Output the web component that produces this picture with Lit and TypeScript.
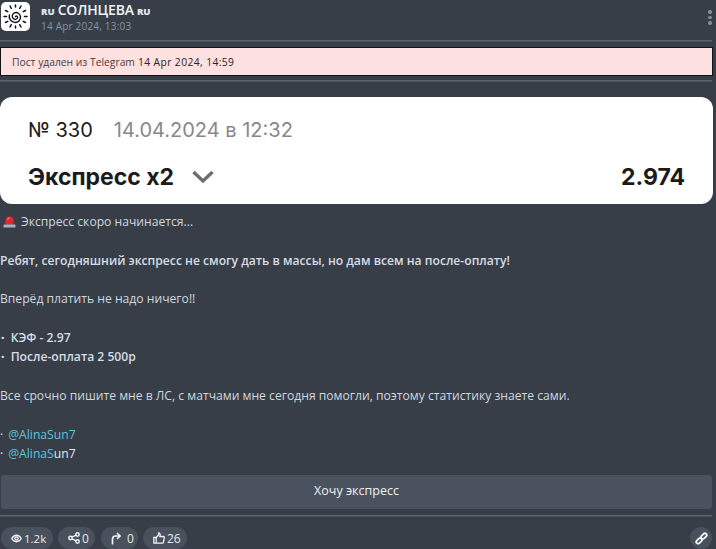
import { LitElement, html, css } from "lit";
import { customElement } from "lit/decorators.js";

@customElement("app-root")
export class AppRoot extends LitElement {
  static styles = css`
    :host { display: block; width: 716px; height: 549px; overflow: hidden; background: #373e48; color: #d5dae2; font-family: "Open Sans", "Noto Sans", sans-serif; font-size: 12px; }
    .wrap { width: 712px; display: flex; flex-direction: column; padding-top: 2px; }
    .head { display: flex; height: 30px; padding-left: 1px; position: relative; }
    .avatar { width: 29px; height: 29px; border-radius: 5px; background: #fff; display: flex; align-items: center; justify-content: center; flex: none; }
    .who { margin-left: 11px; display: flex; flex-direction: column; }
    .name { font-size: 14px; line-height: 16px; color: #f2f5f8; font-weight: 600; display: flex; align-items: baseline; gap: 3px; letter-spacing: -0.15px; }
    .flag { font-size: 9.5px; font-weight: 800; color: #e4e8ee; letter-spacing: 0; }
    .date { font-size: 10px; line-height: 14px; color: #8494a8; margin-top: -1px; letter-spacing: 0.2px; }
    .dots { position: absolute; left: 708px; top: 8px; display: flex; flex-direction: column; gap: 2px; }
    .dots i { width: 3.5px; height: 3.5px; border-radius: 50%; background: #7e8ea3; display: block; }
    .rule { height: 1px; background: #5a6470; border-bottom: 1px solid #49525d; margin-top: 8px; }
    .alert { margin-top: 5px; width: 713px; height: 29px; box-sizing: border-box; border: 1.5px solid #10141a; background: #fde0e0; color: #4a3a3c; font-size: 10.3px; display: flex; align-items: center; padding-left: 11px; }
    .alert b { font-weight: 500; color: #2f2023; margin-left: 3px; letter-spacing: 0.4px; }
    .rule2 { margin-top: 4px; }
    .card { margin-top: 15px; width: 713px; height: 107px; box-sizing: border-box; background: #fff; border-radius: 12px; padding: 21px 28px 0; font-family: "Inter", sans-serif; color: #1b1b1d; }
    .row1 { font-size: 20px; line-height: 24px; display: flex; gap: 21px; }
    .row1 span { color: #85888d; }
    .row2 { display: flex; align-items: center; margin-top: 21px; font-size: 23px; font-weight: 700; line-height: 28px; }
    .row2 svg { margin-left: 18px; }
    .row2 .odd { margin-left: auto; }
    .post { margin-top: 8px; line-height: 19.35px; font-size: 12.15px; color: #d0d6df; }
    .post p { margin: 0; white-space: nowrap; }
    .gap { height: 19.35px; }
    .strong { font-weight: 600; color: #d6dce4; }
    .semi { font-weight: 500; color: #e4e8ee; }
    .siren { display: inline-block; vertical-align: -2px; margin: 0 5px 0 3px; }
    .link { color: #5cc4de; margin-left: 5px; }
    .bullet { margin-right: 3px; margin-left: 1px; font-weight: 800; }
    .btn { margin-top: 12px; margin-left: 1px; width: 711px; height: 34px; background: #49525e; border-radius: 3px; display: flex; align-items: center; justify-content: center; color: #eef1f5; font-weight: 500; font-size: 12.5px; padding-bottom: 3px; box-sizing: border-box; }
    .rule3 { margin-top: 6px; }
    .foot { display: flex; margin-top: 10px; gap: 5px; padding-left: 1px; position: relative; }
    .pill { height: 22px; border-radius: 11px; background: #48515c; display: flex; align-items: center; gap: 2px; padding: 0 0 0 10px; color: #e6eaef; font-size: 12px; font-weight: 500; box-sizing: border-box; }
    .p1 { width: 52px; font-size: 11.5px; } .p2 { width: 37px; } .p3 { width: 37px; margin-left: 1px; gap: 3px; } .p4 { width: 44px; }
    .chain { position: absolute; left: 690px; top: 0; width: 22px; height: 22px; border-radius: 50%; background: #48515c; display: flex; align-items: center; justify-content: center; }
  `;

  render() {
    return html`
      <div class="wrap">
        <div class="head">
          <div class="avatar">
            <svg width="25" height="25" viewBox="0 0 25 25" fill="none" stroke="#111" stroke-linecap="round">
              <path stroke-width="1.4" d="M12.5 12.5c1-1 2.4 0 2 1.4-.5 1.7-3 2-4.3.7-1.7-1.7-1-4.8 1.2-5.700 2.800-1.100 5.800.8 6.100 3.800.3 3.400-2.500 6-5.800 5.700-3.800-.3-6.200-4-5.300-7.500"/>
              <path stroke-width="1.5" d="M12.5 1v2M18 2l-1.300 2.300M22.500 6.500l-2.300 1.200M24 12.500h-2.500M22.500 18.500l-2.300-1.200M18 23l-1.300-2.300M12.500 24v-2M7 23l1.300-2.300M2.500 18.500l2.300-1.200M1 12.500h2.500M2.500 6.500l2.300 1.200M7 2l1.300 2.300"/>
            </svg>
          </div>
          <div class="who">
            <div class="name"><span class="flag">RU</span>СОЛНЦЕВА<span class="flag">RU</span></div>
            <div class="date">14 Apr 2024, 13:03</div>
          </div>
          <div class="dots"><i></i><i></i><i></i></div>
        </div>
        <div class="rule"></div>
        <div class="alert">Пост удален из Telegram <b>14 Apr 2024, 14:59</b></div>
        <div class="rule rule2"></div>
        <div class="card">
          <div class="row1">№ 330 <span>14.04.2024 в 12:32</span></div>
          <div class="row2">Экспресс х2
            <svg width="22" height="14" viewBox="0 0 22 14" fill="none" stroke="#6b6e73" stroke-width="3.400"><path d="M1.500 2L11 11l9.500-9"/></svg>
            <span class="odd">2.974</span>
          </div>
        </div>
        <div class="post">
          <p><svg class="siren" width="13" height="13" viewBox="0 0 13 13"><path d="M2.500 9.500V5.500a4 4 0 0 1 8 0v4z" fill="#e0282e"/><path d="M4.500 4.500a2 2 0 0 1 2-1.500" stroke="#f9a0a0" fill="none"/><rect x=".5" y="9.500" width="12" height="3" rx=".6" fill="#a9b0ba"/></svg>Экспресс скоро начинается...</p>
          <div class="gap"></div>
          <p class="strong">Ребят, сегодняшний экспресс не смогу дать в массы, но дам всем на после-оплату!</p>
          <div class="gap"></div>
          <p>Вперёд платить не надо ничего!!</p>
          <div class="gap"></div>
          <p class="strong"><span class="bullet">·</span> КЭФ - 2.97</p>
          <p class="strong"><span class="bullet">·</span> После-оплата 2 500р</p>
          <div class="gap"></div>
          <p>Все срочно пишите мне в ЛС, с матчами мне сегодня помогли, поэтому статистику знаете сами.</p>
          <div class="gap"></div>
          <p>·<span class="link">@AlinaSun7</span></p>
          <p class="semi">·<span class="link">@AlinaS</span>un7</p>
        </div>
        <div class="btn">Хочу экспресс</div>
        <div class="rule rule3"></div>
        <div class="foot">
          <div class="pill p1">
            <svg width="11" height="11" viewBox="0 0 12 12" fill="none" stroke="#eef1f5" stroke-width="1.500"><path d="M.8 6C2.200 3.500 4 2.500 6 2.500S9.800 3.500 11.200 6C9.800 8.500 8 9.500 6 9.500S2.200 8.500.8 6z"/><circle cx="6" cy="6" r="1.700"/></svg>1.2k
          </div>
          <div class="pill p2">
            <svg width="12" height="12" viewBox="0 0 12 12" fill="none" stroke="#eef1f5" stroke-width="1.500"><circle cx="2.500" cy="6" r="1.700"/><circle cx="9.500" cy="2.500" r="1.700"/><circle cx="9.500" cy="9.500" r="1.700"/><path d="M4 5.200l4-2M4 6.800l4 2"/></svg>0
          </div>
          <div class="pill p3">
            <svg width="10" height="13" viewBox="0 0 10 13" fill="none" stroke="#eef1f5" stroke-width="1.700"><path d="M1.500 12.500V7Q1.500 4 4.500 4H9M6 1L9 4 6 7"/></svg>&nbsp;0
          </div>
          <div class="pill p4">
            <svg width="12" height="12" viewBox="0 0 12 12" fill="none" stroke="#eef1f5" stroke-width="1.300"><path d="M.8 5.500h2.400v5.700H.8zM3.200 5.500L5.500 3V1c1.300 0 1.800 1 1.600 2.200L6.800 4.500h3.600c.8 0 1 .6.900 1.200l-.8 4.500c-.1.600-.5 1-1.100 1H3.200"/></svg>26
          </div>
          <div class="chain">
            <svg width="13" height="13" viewBox="0 0 12 12" fill="none" stroke="#f2f4f7" stroke-width="1.700"><rect x="-3" y="-1.700" width="6" height="3.400" rx="1.700" transform="translate(3.800 8.200) rotate(-45)"/><rect x="-3" y="-1.700" width="6" height="3.400" rx="1.700" transform="translate(8.200 3.800) rotate(-45)"/></svg>
          </div>
        </div>
      </div>
    `;
  }
}
